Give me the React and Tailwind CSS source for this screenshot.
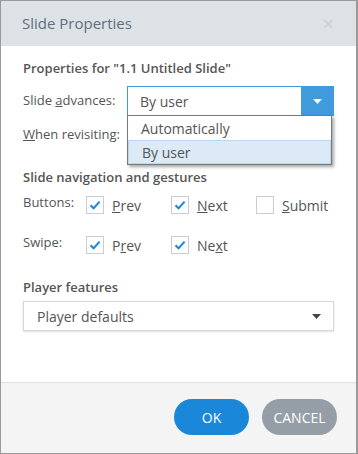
import React, { useState } from 'react';

const Check = ({ checked }) => (
  <span className="w-[18px] h-[18px] border border-[#c9cdd1] bg-white flex items-center justify-center shrink-0">
    {checked && (
      <svg width="12" height="10" viewBox="0 0 12 10">
        <path d="M1.5 5.2 L4.6 8.2 L10.6 1.6" fill="none" stroke="#1a87d9" strokeWidth="2" />
      </svg>
    )}
  </span>
);

const CheckItem = ({ checked, label, width }) => (
  <label className={`flex items-center gap-[8px] ${width || ''}`}>
    <Check checked={checked} />
    <span className="text-[14px]">{label}</span>
  </label>
);

const App = () => {
  const [advance] = useState('By user');

  return (
    <div
      className="w-[358px] h-[454px] bg-white border border-[#9a9a9a] border-r-2 flex flex-col text-[#555] text-[13px]"
      style={{ fontFamily: '"Open Sans", "Noto Sans", sans-serif' }}
    >
      <div className="h-[45px] bg-[#dde2e6] flex items-center justify-between pl-[21px] pr-[22px] shrink-0">
        <span className="text-[15px] text-[#5f6e7c]">Slide Properties</span>
        <span className="text-[#c8cdd1] text-[20px] leading-none">×</span>
      </div>

      <div className="flex-1 px-[22px] pt-[13px]">
        <div className="font-semibold text-[#555] h-[22px]">Properties for "1.1 Untitled Slide"</div>

        <div className="relative mt-[5px]">
          <div className="flex items-center h-[30px]">
            <span className="w-[104px] shrink-0">
              Slide <u>a</u>dvances:
            </span>
            <div className="flex-1 h-[30px] border border-[#3f9bdc] flex items-stretch">
              <div className="flex-1 pl-[12px] flex items-center text-[14px]">{advance}</div>
              <div className="w-[32px] bg-[#3f9bdc] flex items-center justify-center">
                <svg width="9" height="5" viewBox="0 0 9 5">
                  <path d="M0 0 H9 L4.5 5 Z" fill="#fff" />
                </svg>
              </div>
            </div>
          </div>
          <div className="flex items-center h-[30px] mt-[4px]">
            <span>
              <u>W</u>hen revisiting:
            </span>
          </div>

          <div className="absolute left-[104px] top-[29px] w-[205px] bg-white border border-[#7a7a7a] shadow-[2px_2px_3px_rgba(0,0,0,0.35)] text-[14px]">
            <div className="h-[24px] pl-[13px] flex items-center">Automatically</div>
            <div className="h-[24px] pl-[13px] flex items-center bg-[#dce9f6] border border-[#bcd6ee]">By user</div>
          </div>
        </div>

        <div className="font-semibold mt-[18px] h-[22px]">Slide navigation and gestures</div>

        <div className="flex items-center mt-[3px] h-[24px]">
          <span className="w-[63px] -mt-[4px]">Buttons:</span>
          <CheckItem checked label={<><u>P</u>rev</>} width="w-[85px]" />
          <CheckItem checked label={<><u>N</u>ext</>} width="w-[85px]" />
          <CheckItem label={<><u>S</u>ubmit</>} />
        </div>

        <div className="flex items-center mt-[16px] h-[24px]">
          <span className="w-[63px] -mt-[4px]">Swipe:</span>
          <CheckItem checked label={<>P<u>r</u>ev</>} width="w-[85px]" />
          <CheckItem checked label={<>Ne<u>x</u>t</>} width="w-[85px]" />
        </div>

        <div className="font-semibold mt-[21px] h-[22px]">Player features</div>

        <div className="mt-[1px] h-[30px] border border-[#d5d9dc] shadow-[0_1px_2px_rgba(0,0,0,0.12)] flex items-center justify-between pl-[13px] pr-[12px] text-[14px]">
          <span>Player defaults</span>
          <svg width="9" height="5" viewBox="0 0 9 5">
            <path d="M0 0 H9 L4.5 5 Z" fill="#444" />
          </svg>
        </div>
      </div>

      <div className="h-[71px] shrink-0 bg-[#f4f4f4] border-t border-[#dbe0e4] flex items-center justify-end gap-[13px] pr-[19px] pb-[2px]">
        <button className="w-[75px] h-[36px] rounded-full bg-[#1a87d9] text-white text-[14px]">OK</button>
        <button className="w-[75px] h-[36px] rounded-full bg-[#959ea6] text-white text-[14px]">CANCEL</button>
      </div>
    </div>
  );
};

export default App;
